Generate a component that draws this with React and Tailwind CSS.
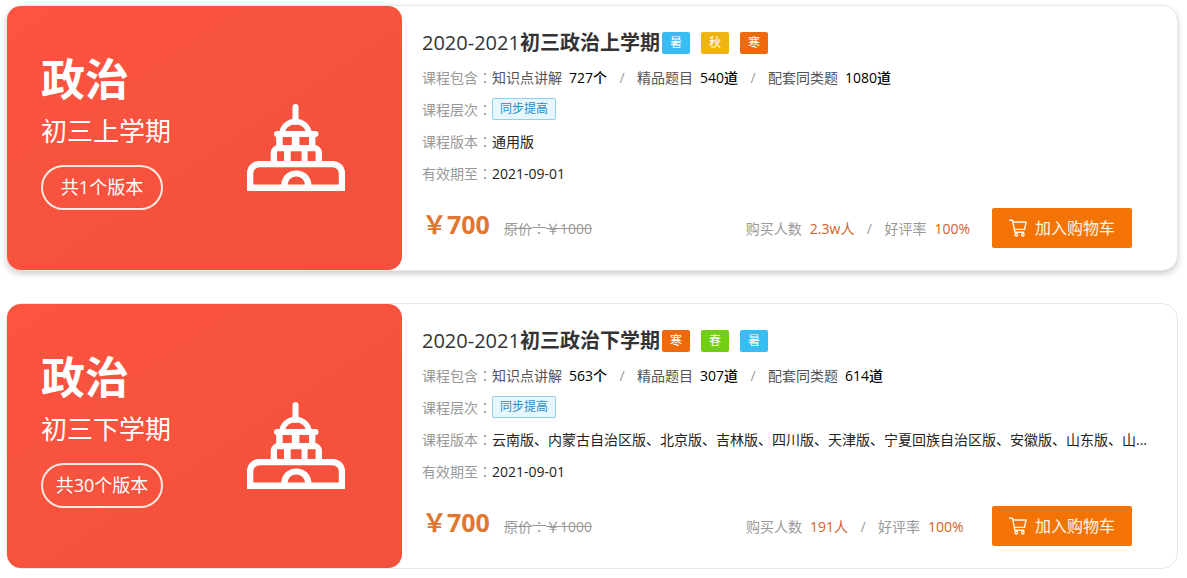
import { Fragment } from "react";

const YUAN = "\uFFE5";

const TAG_COLORS = {
  暑: "bg-[#37bdf2]",
  秋: "bg-[#f0b412]",
  寒: "bg-[#ef6a0e]",
  春: "bg-[#71ce12]",
};

const COURSES = [
  {
    subject: "政治",
    term: "初三上学期",
    versionCount: "共1个版本",
    years: "2020-2021",
    title: "初三政治上学期",
    tags: ["暑", "秋", "寒"],
    contents: [
      ["知识点讲解", "727个"],
      ["精品题目", "540道"],
      ["配套同类题", "1080道"],
    ],
    level: "同步提高",
    versions: "通用版",
    expires: "2021-09-01",
    buyers: "2.3w人",
    rating: "100%",
    raised: true,
  },
  {
    subject: "政治",
    term: "初三下学期",
    versionCount: "共30个版本",
    years: "2020-2021",
    title: "初三政治下学期",
    tags: ["寒", "春", "暑"],
    contents: [
      ["知识点讲解", "563个"],
      ["精品题目", "307道"],
      ["配套同类题", "614道"],
    ],
    level: "同步提高",
    versions:
      "云南版、内蒙古自治区版、北京版、吉林版、四川版、天津版、宁夏回族自治区版、安徽版、山东版、山...",
    expires: "2021-09-01",
    buyers: "191人",
    rating: "100%",
    raised: false,
  },
];

function CapitolIcon() {
  return (
    <svg className="h-[87px] w-[98px]" viewBox="0 0 98 87" fill="none" aria-hidden="true">
      <path d="M48.5 3V18" stroke="#fff" strokeWidth="6" strokeLinecap="round" />
      <path d="M35.2 29.5a13.3 12 0 0 1 26.6 0" stroke="#fff" strokeWidth="5.6" />
      <path d="M30 30H68.5" stroke="#fff" strokeWidth="6" strokeLinecap="round" />
      <path
        fill="#fff"
        fillRule="evenodd"
        d="M29.2 30H68.4V42H29.2ZM35.7 32.8V41H44.8V32.8ZM52.4 32.8V41H62V32.8Z"
      />
      <path
        fill="#fff"
        fillRule="evenodd"
        d="M23.7 59V49a8 8 0 0 1 8-8H67a8 8 0 0 1 8 8V59ZM30 47.2V57H37V47.2ZM43.7 47.2V57H54.6V47.2ZM60.6 47.2V57H68.6V47.2Z"
      />
      <path
        fill="#fff"
        fillRule="evenodd"
        d="M0 87V69a12 12 0 0 1 12-12H86a12 12 0 0 1 12 12V87ZM6.3 80.5H34.2C35 72 41 66.6 49.3 66.6S63.8 72 64.5 80.5H91.8V69.5a6.3 6.3 0 0 0-6.3-6.3H12.6a6.3 6.3 0 0 0-6.3 6.3ZM40.7 80.5H58C57.3 75.5 53.8 72.6 49.3 72.6S41.4 75.5 40.7 80.5Z"
      />
    </svg>
  );
}

function CartIcon() {
  return (
    <svg className="size-[18px]" viewBox="0 0 18 18" fill="none" stroke="currentColor" strokeWidth="1.4" aria-hidden="true">
      <path d="M0 1.3H3.6L5.8 13.2H15.4" strokeLinejoin="round" />
      <path d="M4.1 3H17L15.6 10.4H5.3" strokeLinejoin="round" />
      <circle cx="7.3" cy="15.7" r="1.3" />
      <circle cx="13.8" cy="15.7" r="1.3" />
    </svg>
  );
}

// The Traditional Chinese face centres the full-width colon in its box.
function Colon() {
  return <span className="font-['Noto_Sans_CJK_TC',sans-serif] leading-none">{"\uFF1A"}</span>;
}

function Slash() {
  return <span className="w-[30px] text-center text-[#999]">/</span>;
}

function Row({ label, children }) {
  return (
    <div className="flex h-8 items-center">
      <dt className="w-[70px] shrink-0 text-[#999]">
        {label}
        <Colon />
      </dt>
      <dd className="flex min-w-0 flex-1 items-center text-[#222]">{children}</dd>
    </div>
  );
}

function CourseCard({ course }) {
  const shadow = course.raised ? "shadow-[0_3px_6px_rgba(0,0,0,0.2)]" : "";
  return (
    <article className={`flex rounded-2xl border border-[#e8e8e8] bg-white ${shadow}`}>
      <div className="flex w-[395px] shrink-0 items-center justify-between rounded-[14px] bg-linear-to-br from-[#fb5440] to-[#f2513d] pr-[57px] pl-[34px] text-white">
        <div className="flex flex-col items-start pb-[18px]">
          <p className="text-[44px] leading-[60px] font-bold">{course.subject}</p>
          <p className="text-[26px] leading-[44px]">{course.term}</p>
          <p className="mt-3 flex h-[45px] w-[122px] items-center justify-center rounded-full border-2 border-[#ffe9e0] text-[18px]">
            {course.versionCount}
          </p>
        </div>
        <div className="pt-[18px]">
          <CapitolIcon />
        </div>
      </div>

      <div className="min-w-0 flex-1 pt-[18px] pr-6 pb-[22px] pl-5">
        <div className="flex h-[37px] items-center gap-[2px]">
          <h2 className="text-[20px] text-[#333]">
            {course.years}
            <span className="font-bold">{course.title}</span>
          </h2>
          <ul className="flex gap-[11px]">
            {course.tags.map((tag) => (
              <li
                key={tag}
                className={`flex h-[22px] w-7 items-center justify-center rounded-[2px] text-[12px] text-white ${TAG_COLORS[tag]}`}
              >
                {tag}
              </li>
            ))}
          </ul>
        </div>

        <dl className="text-[14px]">
          <Row label="课程包含">
            {course.contents.map(([name, count], i) => (
              <Fragment key={name}>
                {i > 0 && <Slash />}
                <span className="text-[#555]">{name}</span>
                <span className="ml-[7px] font-medium text-black">{count}</span>
              </Fragment>
            ))}
          </Row>
          <Row label="课程层次">
            <span className="flex h-[22px] items-center rounded-[2px] border border-[#8fd0ee] bg-[#e6f7ff] px-[7px] text-[12px] text-[#2a8cc4]">
              {course.level}
            </span>
          </Row>
          <Row label="课程版本">
            <span className="truncate">{course.versions}</span>
          </Row>
          <Row label="有效期至">{course.expires}</Row>
        </dl>

        <div className="mt-[19px] flex h-10 items-center pr-[21px] text-[14px] whitespace-nowrap text-[#999]">
          <span className="pb-2 text-[25px] leading-9 font-bold text-[#e0762f]">
            {YUAN}700
          </span>
          <del className="ml-[14px]">
            原价
            <Colon />
            {YUAN}1000
          </del>
          <div className="ml-auto flex min-w-[224px] items-center">
            <span>购买人数</span>
            <span className="ml-2 text-[#d4602a]">{course.buyers}</span>
            <Slash />
            <span>好评率</span>
            <span className="ml-2 text-[#d4602a]">{course.rating}</span>
          </div>
          <button
            type="button"
            className="ml-[22px] flex h-10 w-[140px] items-center justify-center gap-2 rounded-[2px] bg-[#f37404] text-[16px] text-[#fff6e6]"
          >
            <CartIcon />
            加入购物车
          </button>
        </div>
      </div>
    </article>
  );
}

export default function App() {
  return (
    <main className="flex flex-col gap-8 bg-white pt-[5px] pr-[9px] pb-2 pl-[6px] font-['Open_Sans','Noto_Sans_CJK_SC',sans-serif]">
      {COURSES.map((course) => (
        <CourseCard key={course.title} course={course} />
      ))}
    </main>
  );
}
